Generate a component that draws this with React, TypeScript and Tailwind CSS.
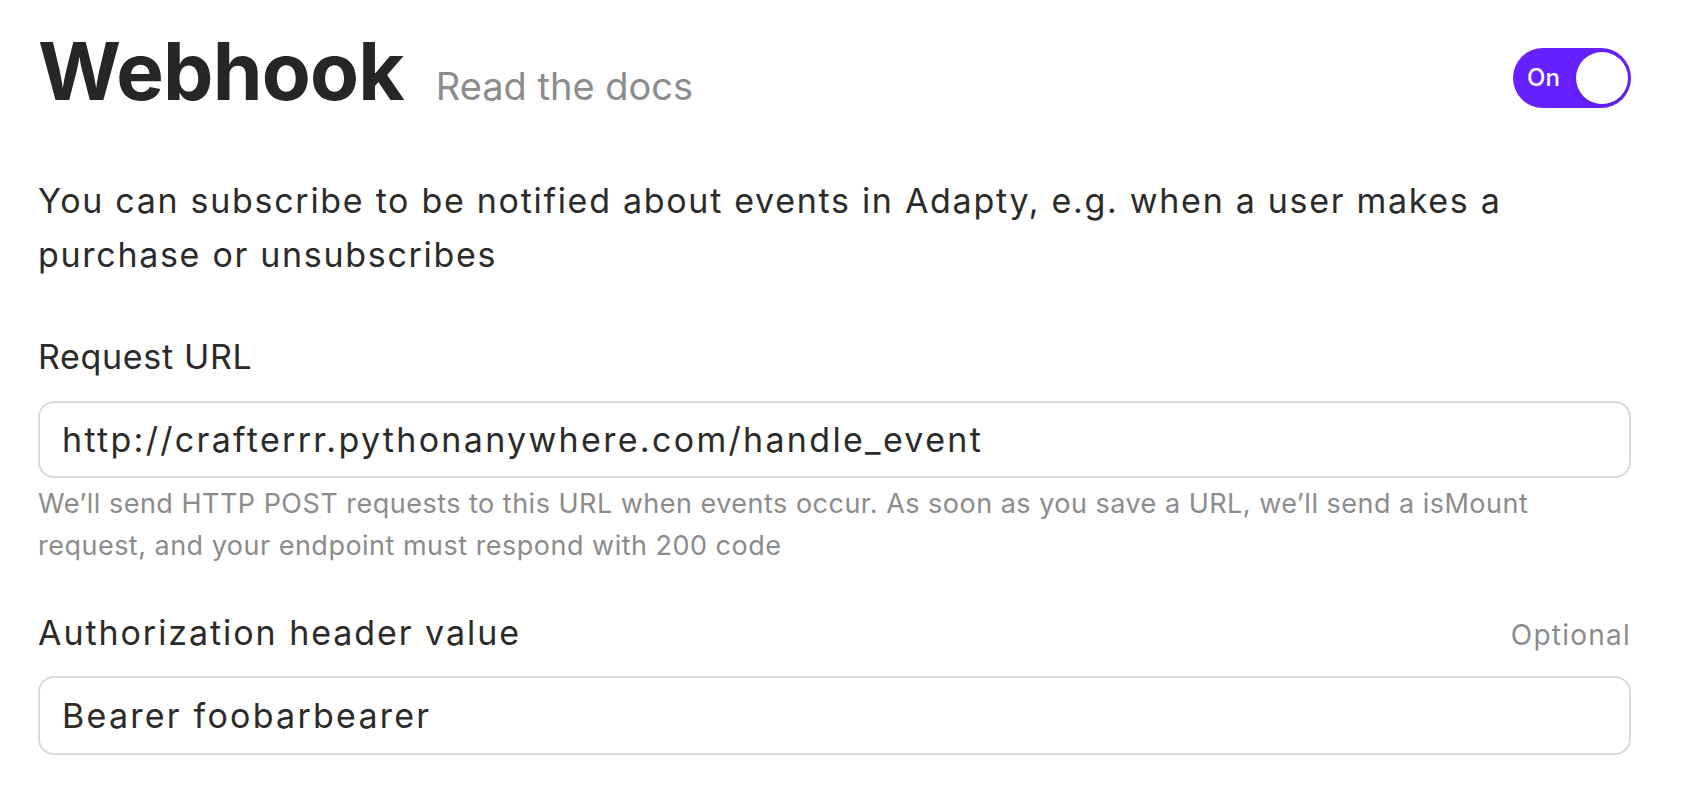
import { useState } from 'react'

const font = { fontFamily: 'Inter, "Noto Sans", sans-serif' }

function Toggle() {
  const [on, setOn] = useState(true)
  return (
    <button
      onClick={() => setOn(v => !v)}
      className="relative flex h-[60px] w-[118px] items-center rounded-full bg-[#6720ff] pl-[14px]"
    >
      <span className="text-[24px] font-medium leading-none text-white">On</span>
      <span className="absolute right-[3px] top-[4px] h-[52px] w-[52px] rounded-full bg-white shadow-[0_3px_6px_rgba(0,0,0,0.12)]" />
    </button>
  )
}

export default function App() {
  return (
    <div className="min-h-screen bg-white pl-[38px] pr-[55px] pt-[31px] text-[#2b2b2b]" style={font}>
      {/* Header */}
      <div className="flex items-start justify-between">
        <div className="flex items-baseline gap-[32px]">
          <h1 className="text-[80px] font-bold leading-[80px] tracking-[-0.01em] text-[#262626]">Webhook</h1>
          <a className="text-[38px] leading-[48px] text-[#8c8c8c]">Read the docs</a>
        </div>
        <div className="mt-[17px]">
          <Toggle />
        </div>
      </div>

      <p className="mt-[63px] text-[34px] leading-[54px] tracking-[0.05em]">
        You can subscribe to be notified about events in Adapty, e.g. when a user makes a<br />
        purchase or unsubscribes
      </p>

      {/* Request URL */}
      <label className="mt-[51px] block text-[34px] leading-[48px] tracking-[0.02em]">Request URL</label>
      <div className="mt-[20px] flex h-[77px] items-center rounded-[16px] border-2 border-[#dadada] px-[22px] text-[34px] tracking-[0.068em]">
        http://crafterrr.pythonanywhere.com/handle_event
      </div>
      <p className="mt-[5px] text-[27px] leading-[42px] tracking-[0.018em] text-[#8c8c8c]">
        We’ll send HTTP POST requests to this URL when events occur. As soon as you save a URL, we’ll send a isMount<br />
        request, and your endpoint must respond with 200 code
      </p>

      {/* Authorization */}
      <div className="mt-[42px] flex items-baseline justify-between">
        <label className="text-[34px] leading-[48px] tracking-[0.057em]">Authorization header value</label>
        <span className="text-[28px] tracking-[0.044em] text-[#8c8c8c]">Optional</span>
      </div>
      <div className="mt-[19px] flex h-[79px] items-center rounded-[16px] border-2 border-[#dadada] px-[22px] text-[34px] tracking-[0.066em]">
        Bearer foobarbearer
      </div>
    </div>
  )
}
